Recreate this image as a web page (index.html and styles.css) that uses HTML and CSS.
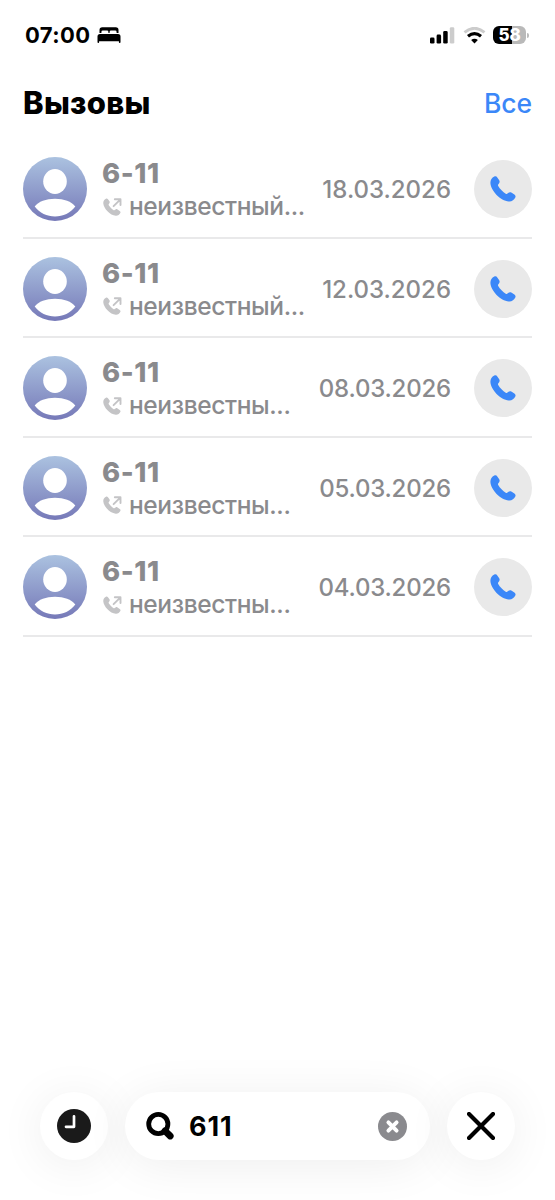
FILE: index.html
```html
<!DOCTYPE html>
<html lang="ru">
<head>
<meta charset="utf-8">
<title>Вызовы</title>
<link rel="stylesheet" href="styles.css">
</head>
<body>
<svg width="0" height="0" class="defs">
  <defs>
    <linearGradient id="av" x1="0" y1="0" x2="0" y2="1"><stop offset="0" stop-color="#abc2e0"/><stop offset="1" stop-color="#7679b8"/></linearGradient>
    <symbol id="avatar" viewBox="0 0 64 64">
      <circle cx="32" cy="32" r="32" fill="url(#av)"/>
      <ellipse cx="32" cy="24.500" rx="11.800" ry="12.400" fill="#fff"/>
      <path d="M11.700 49.500C15.500 44.600 23 41.800 32 41.800S48.500 44.600 52.300 49.500C47.500 56 40 59.400 32 59.400S16.500 56 11.700 49.500Z" fill="#fff"/>
    </symbol>
    <symbol id="phone" viewBox="0 0 26 26">
      <path d="M4.300 .6C5.500 .1 6.500 .3 7.300 1.400L9.200 4.300C9.900 5.400 9.700 6.300 9.100 7.200L8.200 8.500C7.900 9 7.900 9.400 8.200 9.900C9.700 12.600 13.100 16.100 15.700 17.700C16.200 18 16.600 18 17.100 17.700L18.500 16.700C19.400 16.100 20.300 16 21.300 16.600L24.400 18.600C25.600 19.500 25.800 20.400 25.300 21.600C24.200 24 21.900 25.700 18.800 25.500C10.500 25 .8 14.800 .4 7.100C.3 4 1.800 1.700 4.300 .6Z" fill="currentColor"/>
    </symbol>
    <symbol id="outgoing" viewBox="0 0 19 18">
      <path transform="translate(0 .3) scale(.68)" d="M4.300 .6C5.500 .1 6.500 .3 7.300 1.400L9.500 4.500C10.200 5.600 10 6.500 9.400 7.400L8.400 8.800C8.100 9.300 8.200 9.600 8.500 10.100C10 12.600 13.100 15.800 15.700 17.400C16.200 17.700 16.600 17.700 17.100 17.300L18.500 16.400C19.400 15.800 20.300 15.700 21.300 16.300L24.600 18.600C25.800 19.500 26 20.400 25.500 21.600C24.200 24 21.900 25.700 18.800 25.500C10.500 25 .8 14.800 .4 7.100C.3 4 1.800 1.700 4.300 .6Z" fill="currentColor"/>
      <path d="M10.600 8.200L17.200 1.600M11.800 1.300H17.500V7" fill="none" stroke="currentColor" stroke-width="1.900" stroke-linecap="round" stroke-linejoin="round"/>
    </symbol>
  </defs>
</svg>
<main class="screen">
  <header class="status">
    <div class="status-left">
      <span class="time">07:00</span>
      <svg class="bed" viewBox="0 0 24 16"><path d="M2.500 6V3Q2.500 .3 5.200 .3H18.800Q21.500 .3 21.500 3V6H19.600V5Q19.600 3.600 18.200 3.600H14Q12.600 3.600 12.600 5V6H11.400V5Q11.400 3.600 10 3.600H5.800Q4.400 3.600 4.400 5V6Z"/><path d="M3 7H21Q23.500 7 23.500 9.500V15.300Q23.500 16 22.600 16Q21.900 16 21.900 15.300V14.300H2.100V15.300Q2.100 16 1.400 16Q.5 16 .5 15.300V9.500Q.5 7 3 7Z"/></svg>
    </div>
    <div class="status-right">
      <svg class="signal" viewBox="0 0 25 17"><rect x="0" y="10.600" width="4.500" height="5.900" rx="1.300"/><rect x="6.600" y="7.600" width="4.500" height="8.900" rx="1.300"/><rect x="13.200" y="4.100" width="4.500" height="12.400" rx="1.300"/><rect x="19.800" y=".2" width="4.500" height="16.300" rx="1.300" fill="#ccc"/></svg>
      <svg class="wifi" viewBox="0 0 23 17"><path d="M1.500 5.400Q11.500-2.800 21.500 5.400" fill="none" stroke="#ccc" stroke-width="2.900"/><path d="M5 9.300Q11.500 4 18 9.300" fill="none" stroke="#000" stroke-width="3.200"/><path d="M8.100 13Q11.500 10.300 14.900 13L11.500 16.500Z"/></svg>
      <div class="battery"><span class="level">58</span><i class="cap"></i></div>
    </div>
  </header>
  <div class="heading"><h1>Вызовы</h1><a class="all">Все</a></div>
  <section class="list">
    <article class="row"><svg class="avatar"><use href="#avatar"/></svg><div class="info"><div class="name">6-11</div><div class="sub"><svg class="out"><use href="#outgoing"/></svg><span>неизвестный...</span></div></div><time class="date">18.03.2026</time><div class="call"><svg><use href="#phone"/></svg></div></article>
    <article class="row"><svg class="avatar"><use href="#avatar"/></svg><div class="info"><div class="name">6-11</div><div class="sub"><svg class="out"><use href="#outgoing"/></svg><span>неизвестный...</span></div></div><time class="date">12.03.2026</time><div class="call"><svg><use href="#phone"/></svg></div></article>
    <article class="row"><svg class="avatar"><use href="#avatar"/></svg><div class="info"><div class="name">6-11</div><div class="sub"><svg class="out"><use href="#outgoing"/></svg><span>неизвестны...</span></div></div><time class="date wide">08.03.2026</time><div class="call"><svg><use href="#phone"/></svg></div></article>
    <article class="row"><svg class="avatar"><use href="#avatar"/></svg><div class="info"><div class="name">6-11</div><div class="sub"><svg class="out"><use href="#outgoing"/></svg><span>неизвестны...</span></div></div><time class="date wide">05.03.2026</time><div class="call"><svg><use href="#phone"/></svg></div></article>
    <article class="row"><svg class="avatar"><use href="#avatar"/></svg><div class="info"><div class="name">6-11</div><div class="sub"><svg class="out"><use href="#outgoing"/></svg><span>неизвестны...</span></div></div><time class="date wide">04.03.2026</time><div class="call"><svg><use href="#phone"/></svg></div></article>
  </section>
  <footer class="bar">
    <div class="round"><svg class="clock" viewBox="0 0 34 34"><circle cx="17" cy="17" r="17" fill="#1a1a1a"/><path d="M17 7.300V17.800H9" fill="none" stroke="#fff" stroke-width="2.700" stroke-linecap="round" stroke-linejoin="round"/></svg></div>
    <div class="search">
      <svg class="lens" viewBox="0 0 28 28"><circle cx="12.300" cy="12" r="9.600" fill="none" stroke="#000" stroke-width="4.800"/><path d="M19 18.800L24.200 24" stroke="#000" stroke-width="6.800" stroke-linecap="round"/></svg>
      <span class="query">611</span>
      <svg class="clear" viewBox="0 0 29 29"><circle cx="14.500" cy="14.500" r="14.500" fill="#8a8a8e"/><path d="M10.400 10.400L18.600 18.600M18.600 10.400L10.400 18.600" stroke="#fff" stroke-width="3.900" stroke-linecap="round"/></svg>
    </div>
    <div class="round"><svg class="close" viewBox="0 0 28 28"><path d="M2 2L26 26M26 2L2 26" stroke="#000" stroke-width="4.200" stroke-linecap="round"/></svg></div>
  </footer>
</main>
</body>
</html>
```
FILE: styles.css
```css
* { box-sizing: border-box; }
body { margin: 0; background: #fff; font-family: Inter, "Liberation Sans", sans-serif; }
svg { display: block; flex: none; }
.defs { position: absolute; }
.screen { width: 555px; height: 1200px; display: flex; flex-direction: column; overflow: hidden; }
.status { height: 70px; padding: 0 26px 0 25px; display: flex; justify-content: space-between; align-items: center; }
.status-left { display: flex; align-items: center; gap: 7px; }
.time { font-size: 22px; font-weight: 700; letter-spacing: .4px; line-height: 28px; }
.bed { width: 24px; height: 16px; }
.status-right { display: flex; align-items: center; }
.signal { width: 25px; height: 17px; margin-right: 8px; }
.wifi { width: 23px; height: 17px; margin-right: 7px; }
.battery { display: flex; align-items: center; gap: 1px; }
.level { width: 33px; height: 18px; border-radius: 6px; background: linear-gradient(90deg, #000 57%, #b9b9b9 57%); color: #fff; font-size: 17px; line-height: 18px; font-weight: 800; text-align: center; letter-spacing: -.2px; }
.cap { width: 2px; height: 5px; border-radius: 0 2px 2px 0; background: #bbb; }
.heading { height: 69.300px; padding: 0 23px 3px; display: flex; justify-content: space-between; align-items: center; }
h1 { margin: 0; font-size: 31px; line-height: 36px; font-weight: 850; letter-spacing: .3px; }
.all { color: #3b87f8; font-size: 26.500px; line-height: 36px; font-weight: 550; letter-spacing: -.1px; }
.list { padding: 0 23px; }
.row { height: 99.500px; padding-top: 2px; display: flex; align-items: center; border-bottom: 2px solid #e9e9ea; }
.avatar { width: 64px; height: 64px; margin-right: 15px; }
.info { flex: 1; min-width: 0; padding-top: 3px; color: #8a8a8d; }
.name { font-size: 27.500px; line-height: 32px; font-weight: 780; letter-spacing: .6px; }
.sub { display: flex; align-items: center; font-size: 24.500px; line-height: 35px; font-weight: 550; letter-spacing: -.38px; white-space: nowrap; }
.out { width: 19px; height: 18px; margin-right: 7px; margin-left: 1px; color: #c4c4c6; }
.date { color: #8a8a8d; font-size: 24px; font-weight: 540; margin-right: 23px; padding-top: 1px; }
.date.wide { letter-spacing: -.2px; }
.call { width: 58px; height: 58px; border-radius: 50%; background: #e9e9e9; color: #3b87f8; display: flex; align-items: center; justify-content: center; }
.call svg { width: 26px; height: 26px; }
.bar { margin-top: auto; padding: 32px 40px 40px; display: flex; justify-content: space-between; }
.round, .search { height: 68px; border-radius: 34px; background: #fff; box-shadow: 0 5px 48px rgba(0,0,0,.07); display: flex; align-items: center; }
.round { width: 68px; justify-content: center; }
.search { width: 305px; padding: 0 23px 0 21px; }
.clock { width: 34px; height: 34px; }
.lens { width: 28px; height: 28px; }
.query { flex: 1; margin-left: 15px; font-size: 27px; font-weight: 680; letter-spacing: .9px; }
.clear { width: 29px; height: 29px; }
.close { width: 28px; height: 28px; }
```
